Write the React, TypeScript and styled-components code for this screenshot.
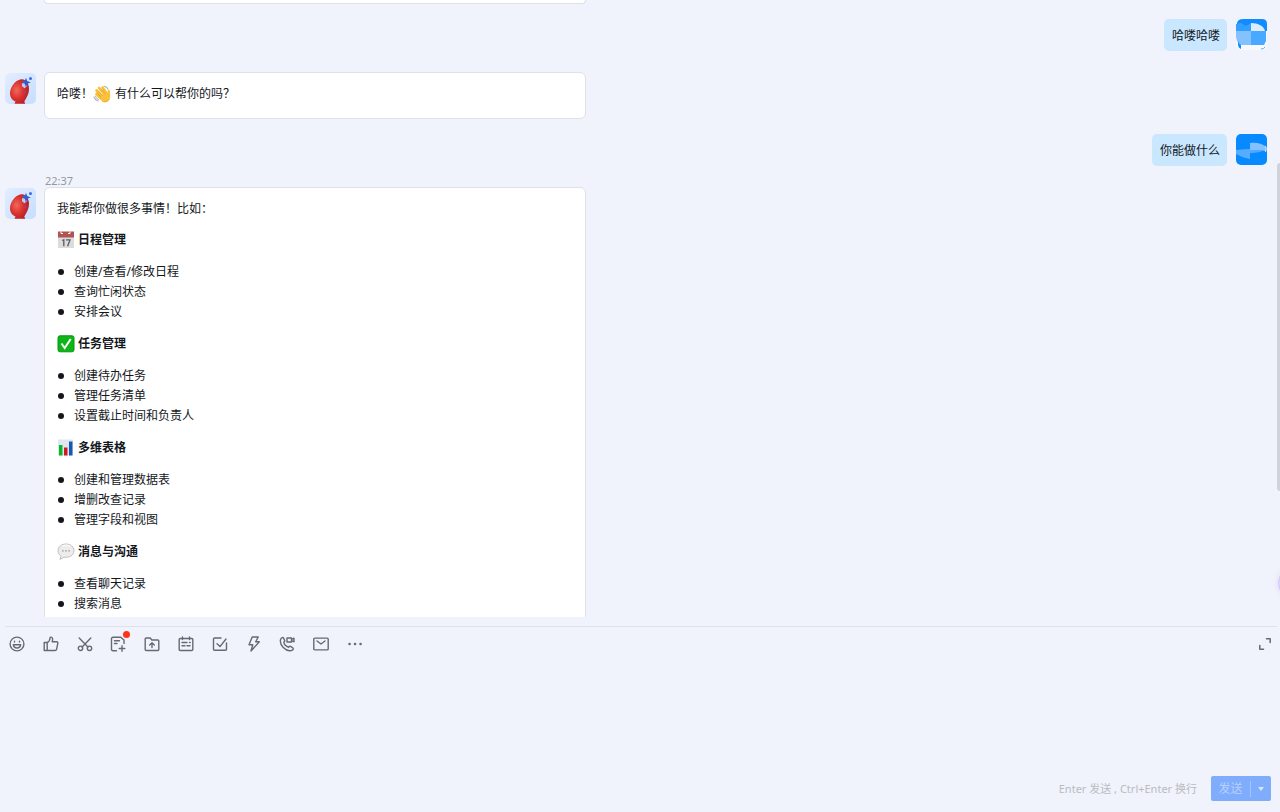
import React from 'react';
import styled, { createGlobalStyle } from 'styled-components';

const GlobalStyle = createGlobalStyle`
  *, *::before, *::after { box-sizing: border-box; }
  body {
    margin: 0;
    background: #f0f3fb;
    color: #14171c;
    font: 12px/20px "Noto Sans", "Noto Sans CJK SC", sans-serif;
  }
  button, textarea { font: inherit; }
`;

const Page = styled.main`
  position: relative;
  display: flex;
  flex-direction: column;
  height: 100vh;
  overflow: hidden;
`;

const History = styled.section`
  flex: 1;
  min-height: 0;
  overflow: hidden;
  display: flex;
  flex-direction: column;
`;

const Incoming = styled.article<{ $gap?: number }>`
  display: flex;
  flex-shrink: 0;
  align-items: flex-start;
  gap: 8px;
  padding-left: 5px;
  margin-top: ${(p) => p.$gap ?? 0}px;
`;

const Outgoing = styled.article`
  display: flex;
  flex-shrink: 0;
  align-items: flex-start;
  justify-content: flex-end;
  gap: 9px;
  margin-top: 15px;
  padding-right: 13px;
`;

const Card = styled.div`
  flex: 0 1 542px;
  padding: 11px 12px 14px;
  border: 1px solid #dce1ea;
  border-radius: 6px;
  background: #fff;
`;

const PreviousCard = styled(Card)`
  height: 4px;
  margin-left: 39px;
  padding: 0;
  border-top: 0;
  border-radius: 0 0 6px 6px;
`;

const Bubble = styled.p`
  margin: 0;
  padding: 7px 7px 5px 8px;
  border-radius: 5px;
  background: #c9e7ff;
`;

const Avatar = styled.svg`
  display: block;
  flex: none;
  width: 31px;
  height: 31px;
`;

const BotPicture = styled(Avatar)`
  margin-top: 1px;
`;

const Time = styled.time`
  display: block;
  flex-shrink: 0;
  height: 14px;
  margin-top: 7px;
  padding-left: 45px;
  color: #9499a1;
  font-size: 11px;
  line-height: 15px;
`;

const Text = styled.p`
  display: flex;
  align-items: center;
  margin: 0;
`;

const Emoji = styled.svg<{ $spaced?: boolean }>`
  flex: none;
  width: 18px;
  height: 18px;
  margin-right: ${(p) => (p.$spaced ? 4 : 3)}px;
`;

const Heading = styled.h3`
  display: flex;
  align-items: center;
  margin: 11px 0 12px;
  font-size: 12px;
  line-height: 20px;
  font-weight: 700;
`;

const List = styled.ul`
  margin: 0 0 12px;
  padding: 0;
  list-style: none;
`;

const Item = styled.li`
  display: flex;
  align-items: center;
  gap: 10px;
  padding-left: 1px;
  &::before {
    content: '';
    width: 6px;
    height: 6px;
    border-radius: 50%;
    background: #14171c;
  }
`;

const Composer = styled.form`
  display: flex;
  flex: 0 0 195px;
  flex-direction: column;
  padding: 9px 0 11px 5px;
`;

const Toolbar = styled.div`
  display: flex;
  justify-content: space-between;
  margin-right: 3px;
  padding-top: 5px;
  border-top: 1px solid #dde2eb;
`;

const Tools = styled.div`
  display: flex;
  flex: 0 1 362px;
  justify-content: space-between;
`;

const Tool = styled.button`
  position: relative;
  display: grid;
  place-items: center;
  width: 24px;
  height: 24px;
  padding: 0;
  border: 0;
  background: none;
`;

const Badge = styled.span`
  position: absolute;
  top: -1px;
  right: 0;
  width: 7px;
  height: 7px;
  border-radius: 50%;
  background: #ff3319;
`;

const Icon = styled.svg`
  width: 16px;
  height: 16px;
  fill: none;
  stroke: #656a71;
  stroke-width: 1.4;
  stroke-linecap: round;
  stroke-linejoin: round;
`;

const Editor = styled.textarea`
  flex: 1;
  width: 100%;
  min-height: 0;
  border: 0;
  outline: 0;
  resize: none;
  background: transparent;
`;

const Footer = styled.div`
  display: flex;
  align-items: center;
  justify-content: flex-end;
  gap: 14px;
  padding-right: 9px;
`;

const Hint = styled.span`
  color: #b9bcc1;
  font-size: 11px;
`;

const SendGroup = styled.div`
  display: flex;
  align-items: center;
  height: 25px;
  border-radius: 2px;
  background: #80acfc;
  color: #b6d0ff;
`;

const Send = styled.button`
  width: 40px;
  padding: 0;
  border: 0;
  border-right: 1px solid #a2c3ff;
  background: none;
  color: inherit;
  line-height: 16px;
`;

const SendMenu = styled.button`
  display: grid;
  place-items: center;
  width: 20px;
  height: 25px;
  padding: 0;
  border: 0;
  background: none;
  color: #d5e4ff;
`;

const ScrollThumb = styled.div`
  position: absolute;
  top: 163px;
  right: 0;
  width: 3px;
  height: 328px;
  border-radius: 3px 0 0 3px;
  background: #cfd3da;
`;

const Assistant = styled.button`
  position: absolute;
  top: 567px;
  right: -30px;
  width: 32px;
  height: 32px;
  padding: 0;
  border: 1px solid #d3c6fa;
  border-radius: 50%;
  background: #e6d8ff;
  box-shadow: 0 0 6px #dcdff0;
`;

const BotAvatar = ({ id }: { id: string }) => (
  <BotPicture viewBox="0 0 31 31" role="img" aria-label="助手">
    <defs>
      <linearGradient id={`${id}-sky`} x1="0" y1="0" x2="1" y2="1">
        <stop offset="0" stopColor="#e2edff" />
        <stop offset="1" stopColor="#c6deff" />
      </linearGradient>
      <radialGradient id={`${id}-red`} cx=".35" cy=".45" r=".7">
        <stop offset="0" stopColor="#f0695c" />
        <stop offset=".5" stopColor="#da332e" />
        <stop offset="1" stopColor="#b01c22" />
      </radialGradient>
    </defs>
    <rect width="31" height="31" rx="5" fill={`url(#${id}-sky)`} />
    <path d="M16 6.2C10 7.5 5 14 5 20.2c0 4.2 2.2 7 5.5 8.2l-1 2.3h10.7c-.4-1.5-1.5-2.2-.3-3.3 2.2-3.4 4.1-7.4 4.1-11.2 0-2.3-.4-4.2-1.5-6.2-1.7-2.8-3.8-4.2-6.5-3.8Z" fill={`url(#${id}-red)`} />
    <path d="M17 13.2c-.5-2 .5-4.2 2.4-5.3l2.9 5-2.8 2.4Z" fill="#bdceef" />
    <path d="m21 4.8 1.2 3.3 3.6 1.3-3.6 1.3L21 14.4l-1.2-3.7-3.6-1.3 3.6-1.3Z" fill="#2b5ddd" />
    <circle cx="25.5" cy="5.5" r="1.5" fill="#3b6ae4" />
    <path d="m20 17 .6 1.4 1.4.6-1.4.6L20 21l-.6-1.4L18 19l1.4-.6Z" fill="#994583" />
  </BotPicture>
);

const CloudAvatar = () => (
  <Avatar viewBox="0 0 31 31" role="img" aria-label="我">
    <rect y="3" width="31" height="28" rx="5" fill="#f7f9fd" />
    <path d="M1 4Q2 0 7 0h19q5 0 5 5v7H1Z" fill="#118cff" />
    <path d="M0 5 5 4l5 3 5-3v8H0Z" fill="#32a0ff" />
    <path d="M15 4c7 0 13 3 14 8H15Z" fill="#dcecff" />
    <path d="M0 12h15v14H4Q0 22 0 17Z" fill="#83c1ff" />
    <path d="M15 12h15v10l-2 4H15Z" fill="#49a8ff" />
    <path d="M2 22q1 3 3 4v4q-3-1-3-5Z" fill="#118cff" />
    <path d="M25 30q3 0 4-2" fill="none" stroke="#58aeff" />
  </Avatar>
);

const WaveAvatar = () => (
  <Avatar viewBox="0 0 31 31" role="img" aria-label="我">
    <rect width="31" height="31" rx="5" fill="#078aff" />
    <path d="M0 16c4 0 8-1 14-1v10C8 24 4 22 0 20Z" fill="#56adff" />
    <path d="M14 9c7-1 13 1 16 4v4H14Z" fill="#83c1ff" />
    <path d="M14 16h15c-4 2-8 3-15 3Z" fill="#4fa9ff" />
    <path d="M29.5 12q1.5 3 0 6" fill="none" stroke="#d5eaff" />
  </Avatar>
);

const Wave = () => (
  <Emoji $spaced viewBox="0 0 18 18" role="img" aria-label="挥手">
    <path d="M1 12q1 3 4 4M2.5 11q.5 2.500 3 3.500M11 1.200q3 .5 4 3" fill="none" stroke="#aeb2b7" strokeWidth="1.100" strokeLinecap="round" />
    <path d="M3.500 9 8 13.500M3.500 5.500 9 11.500M6 3l6 7M9.500 2.500 14 9" stroke="#f8bd38" strokeWidth="2.600" strokeLinecap="round" />
    <path d="M7 12 12.500 6.500l1.800 1.700c.4-1 .2-3 1-3.400.9-.4 1.600.5 1.600 1.700 0 2.100.7 4.300.1 6.500-.7 2.700-2.700 4.200-5 4.200-2.400 0-4.200-2.500-5-5.200Z" fill="#f9c23d" />
    <path d="M4.600 8.500 8 12M5.500 6l4 4.500M8.500 4l4 5M8.500 15.500c2.500 2.300 6 1.900 7.800-1.400" fill="none" stroke="#e8971f" strokeWidth=".6" />
  </Emoji>
);

const Calendar = () => (
  <Emoji viewBox="0 0 18 18" role="img" aria-label="日历">
    <path d="M1 2h16v15H1Z" fill="#dcdcdc" />
    <path d="M1 .5h16v6H1Z" fill="#b05355" />
    <path d="M4 .5v2h2M13 .5v2h-2" fill="none" stroke="#fff" />
    <path d="m5.200 9.500 1.600-.8v6.500M9 8.900h4l-2.400 6.300" fill="none" stroke="#565d62" strokeWidth="1.300" />
  </Emoji>
);

const Check = () => (
  <Emoji viewBox="0 0 18 18" role="img" aria-label="完成">
    <rect x="1" y=".8" width="16" height="16" rx="2" fill="#0db516" stroke="#079612" />
    <path d="m4.500 8.500 3.200 4.500L13.700 4" fill="none" stroke="#fff" strokeWidth="2" />
  </Emoji>
);

const Bars = () => (
  <Emoji viewBox="0 0 18 18" role="img" aria-label="图表">
    <path d="M1 .5h15v16H1Z" fill="#dfe7ee" />
    <path d="M2 6h3.500v10.500H2Z" fill="#08b725" />
    <path d="M7 8.500h3.500v8H7Z" fill="#d01722" />
    <path d="M12 2.500h3.500v14H12Z" fill="#1458ba" />
  </Emoji>
);

const Speech = () => (
  <Emoji viewBox="0 0 18 18" role="img" aria-label="消息">
    <path d="M9 1C4.400 1 1 3.800 1 7.600c0 2.400 1.100 4.300 3 5.500l-1 3.400 4-2.300c5.500.8 10-2 10-6.600C17 3.800 13.600 1 9 1Z" fill="#ececec" stroke="#b4b4b4" strokeWidth=".8" />
    <path d="M5 3q4-2 8 0" fill="none" stroke="#fff" />
    <path d="M5.200 7.200h1.300v1.300H5.200ZM8.300 7.200h1.300v1.300H8.300ZM11.400 7.200h1.300v1.300h-1.300Z" fill="#888" />
  </Emoji>
);

const sections = [
  { title: '日程管理', icon: <Calendar />, items: ['创建/查看/修改日程', '查询忙闲状态', '安排会议'] },
  { title: '任务管理', icon: <Check />, items: ['创建待办任务', '管理任务清单', '设置截止时间和负责人'] },
  { title: '多维表格', icon: <Bars />, items: ['创建和管理数据表', '增删改查记录', '管理字段和视图'] },
  { title: '消息与沟通', icon: <Speech />, items: ['查看聊天记录', '搜索消息'] },
];

const tools: { label: string; art: React.ReactNode; badge?: boolean }[] = [
  {
    label: '表情',
    art: (
      <>
        <circle cx="8" cy="8" r="6.9" />
        <path d="M5.500 5.300v.8M10.500 5.300v.8M4.300 8.700h7.400c-.3 2.200-1.700 3.300-3.700 3.300s-3.400-1.100-3.700-3.300Z" />
      </>
    ),
  },
  {
    label: '点赞',
    art: (
      <path d="M4.200 6.500v8M1.200 6.500h3C6 5.800 6.800 4.100 7 2.200c.1-.8.6-1.200 1.200-1.100C9.700 1.400 10 3.200 9.200 5.800h4.300c1 0 1.500.7 1.300 1.600l-1.200 5.700c-.2.9-.8 1.400-1.700 1.400H1.200Z" />
    ),
  },
  {
    label: '截图',
    art: (
      <>
        <path d="m2.200 2 8.700 9M13.800 2l-8.700 9" />
        <circle cx="3.500" cy="12.300" r="2.200" />
        <circle cx="12.500" cy="12.300" r="2.200" />
      </>
    ),
  },
  {
    label: '新建文档',
    badge: true,
    art: <path d="M6.500 14.700H3c-1 0-1.500-.5-1.500-1.500V2.800c0-1 .5-1.500 1.500-1.500h7.700L14 4v3.500M4.500 4.800h5M4.500 7.500H7M12 9.700v5.600M9.200 12.500h5.600" />,
  },
  {
    label: '上传文件',
    art: <path d="M1.200 3c0-.6.4-1 1-1h4l1.600 2h6c.6 0 1 .4 1 1v8.500c0 .6-.4 1-1 1H2.200c-.6 0-1-.4-1-1ZM8 11.500V7M5.700 9 8 6.800 10.300 9" />,
  },
  {
    label: '日程',
    art: <path d="M2.200 2.500h11.600c.6 0 1 .4 1 1v10c0 .6-.4 1-1 1H2.200c-.6 0-1-.4-1-1v-10c0-.6.4-1 1-1ZM4.500 1v2.500M11.500 1v2.500M4 6.500h5M11.500 6.500h.7M4 9.700h3M9 9.700h3" />,
  },
  {
    label: '任务',
    art: <path d="M9 2H2.500c-.6 0-1 .4-1 1v10.300c0 .6.400 1 1 1h11c.6 0 1-.4 1-1V7M5 7.800l3 2.800L14 3" />,
  },
  {
    label: '快捷操作',
    art: <path d="M6.200 1h6L9.700 5.800h3.600L5 15l1.800-6.200H3Z" />,
  },
  {
    label: '通话',
    art: (
      <>
        <path d="M1.600 3.400C.1 8.800 6.700 15.800 12.300 14.500c2.400-.7 2.600-2.100.8-3.200l-1.600-.9c-.8-.4-1.300.1-1.800.8C7 10.500 5.200 8.500 4.800 6.200c.8-.5 1.200-.9.8-1.800L4.800 2.500C4.100 1 2.300 1.400 1.600 3.400Z" />
        <path d="M8 2h4.500v4H8ZM12.500 3.500 15 2.200v3.600l-2.500-1.300" />
      </>
    ),
  },
  {
    label: '邮件',
    art: <path d="M1.800 2.100h12.400c.6 0 1 .4 1 1v9.800c0 .6-.4 1-1 1H1.800c-.6 0-1-.4-1-1V3.100c0-.6.4-1 1-1ZM4 5l4 3 4-3" />,
  },
  {
    label: '更多',
    art: <path d="M2.500 8h.1M8 8h.1M13.500 8h.1" strokeWidth="2.500" />,
  },
];

export default function App() {
  return (
    <>
      <GlobalStyle />
      <Page>
        <History aria-label="聊天记录">
          <Incoming>
            <PreviousCard />
          </Incoming>
          <Outgoing>
            <Bubble>哈喽哈喽</Bubble>
            <CloudAvatar />
          </Outgoing>
          <Incoming $gap={21}>
            <BotAvatar id="first" />
            <Card>
              <Text>哈喽！<Wave />有什么可以帮你的吗？</Text>
            </Card>
          </Incoming>
          <Outgoing>
            <Bubble>你能做什么</Bubble>
            <WaveAvatar />
          </Outgoing>
          <Time>22:37</Time>
          <Incoming>
            <BotAvatar id="second" />
            <Card>
              <Text>我能帮你做很多事情！比如：</Text>
              {sections.map((section) => (
                <React.Fragment key={section.title}>
                  <Heading>{section.icon}{section.title}</Heading>
                  <List>
                    {section.items.map((item) => <Item key={item}>{item}</Item>)}
                  </List>
                </React.Fragment>
              ))}
            </Card>
          </Incoming>
        </History>
        <Composer onSubmit={(e) => e.preventDefault()}>
          <Toolbar>
            <Tools>
              {tools.map((tool) => (
                <Tool key={tool.label} type="button" aria-label={tool.label}>
                  <Icon viewBox="0 0 16 16">{tool.art}</Icon>
                  {tool.badge && <Badge />}
                </Tool>
              ))}
            </Tools>
            <Tool type="button" aria-label="展开">
              <Icon viewBox="0 0 16 16"><path d="M9.500 2.800h3.700v3.700M6.500 13.200H2.800V9.500" strokeWidth="1.500" /></Icon>
            </Tool>
          </Toolbar>
          <Editor aria-label="输入消息" />
          <Footer>
            <Hint>Enter 发送 , Ctrl+Enter 换行</Hint>
            <SendGroup>
              <Send type="submit">发送</Send>
              <SendMenu type="button" aria-label="发送选项">
                <svg width="6" height="4" viewBox="0 0 6 4"><path d="M0 0h6L3 4Z" fill="currentColor" /></svg>
              </SendMenu>
            </SendGroup>
          </Footer>
        </Composer>
        <ScrollThumb />
        <Assistant type="button" aria-label="智能助手" />
      </Page>
    </>
  );
}
